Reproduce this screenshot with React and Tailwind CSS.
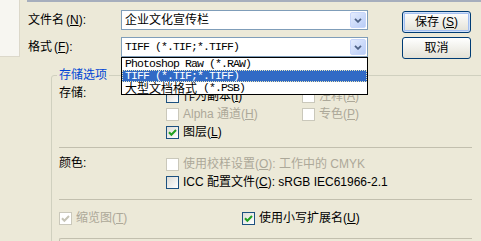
import React from "react";

function Chk({ checked, disabled }) {
  return (
    <span
      className={
        disabled
          ? "w-[13px] h-[13px] shrink-0 border border-[#cac8bb] bg-white flex items-center justify-center"
          : "w-[13px] h-[13px] shrink-0 border border-[#1c5180] bg-linear-to-br from-[#dcdcd7] to-white flex items-center justify-center"
      }
    >
      {checked && (
        <svg width="9" height="9" viewBox="0 0 9 9">
          <path
            d="M1 4.2 L3.4 6.8 L8 2"
            fill="none"
            stroke={disabled ? "#c6c4b6" : "#21a121"}
            strokeWidth="2"
          />
        </svg>
      )}
    </span>
  );
}

function Opt({ checked, disabled, children }) {
  return (
    <div className="flex items-center h-[18px]">
      <Chk checked={checked} disabled={disabled} />
      <span
        className={
          disabled
            ? "ml-[4px] text-[12px] leading-[14px] whitespace-nowrap text-[#aca899]"
            : "ml-[4px] text-[12px] leading-[14px] whitespace-nowrap text-black"
        }
      >
        {children}
      </span>
    </div>
  );
}

function Arrow() {
  return (
    <span className="w-[16px] h-[16px] mr-[1px] shrink-0 rounded-[2px] border border-[#c7d6fb] bg-linear-to-br from-[#e4ecfe] to-[#b8ccf6] flex items-center justify-center">
      <svg width="8" height="5" viewBox="0 0 8 5">
        <path d="M1 0.8 L4 3.8 L7 0.8" fill="none" stroke="#4d6185" strokeWidth="1.8" />
      </svg>
    </span>
  );
}

const MONO = "font-['Liberation_Mono',monospace] text-[11.5px] tracking-[-0.9px]";

export default function App() {
  return (
    <div className="w-[481px] h-[241px] overflow-hidden bg-[#ece9d8] text-black text-[12px] leading-[14px] font-['Liberation_Sans','Noto_Sans_CJK_SC',sans-serif]">
      {/* top section */}
      <div className="flex h-[59px]">
        <div className="w-[20px] h-[57px] shrink-0 bg-[#f7f6f1] border-r border-b border-[#dcd8ca]" />
        <div className="ml-[7px] flex-1 flex flex-col">
          <div className="h-[2px] w-full bg-[#a6aebd]" />
          <div className="flex mt-[8px]">
            <div className="flex flex-col">
              <div className="flex items-center h-[20px]">
                <span className="w-[94px] pl-[1px] whitespace-nowrap">
                  文件名<span className="ml-[2px]">(<u>N</u>):</span>
                </span>
                <div className="w-[247px] h-[20px] border border-[#7f9db9] bg-white flex items-center">
                  <span className="flex-1 pl-[3px] whitespace-nowrap">企业文化宣传栏</span>
                  <Arrow />
                </div>
              </div>
              <div className="flex items-center h-[20px] mt-[7px]">
                <span className="w-[94px] pl-[1px] whitespace-nowrap">
                  格式<span className="ml-[2px]">(<u>F</u>):</span>
                </span>
                <div className="relative w-[247px] h-[20px] border border-[#7f9db9] bg-white flex items-center">
                  <span className={"flex-1 pl-[3px] whitespace-nowrap " + MONO}>
                    TIFF (*.TIF;*.TIFF)
                  </span>
                  <Arrow />
                  <div className="absolute left-[-1px] top-[19px] w-[247px] h-[38px] border border-black bg-white z-10 flex flex-col">
                    <div className={"h-[12px] leading-[12px] pl-[3px] whitespace-nowrap " + MONO}>
                      Photoshop Raw (*.RAW)
                    </div>
                    <div
                      className={
                        "h-[12px] leading-[12px] pl-[3px] whitespace-nowrap bg-[#316ac5] text-white outline-1 outline-dotted outline-[#e8e4b8] -outline-offset-1 " +
                        MONO
                      }
                    >
                      TIFF (*.TIF;*.TIFF)
                    </div>
                    <div className="h-[12px] leading-[12px] pl-[3px] whitespace-nowrap flex items-center">
                      <span className="text-[12px] leading-[12px] font-['Noto_Sans_CJK_SC',sans-serif]">
                        大型文档格式
                      </span>
                      <span className={MONO}>&nbsp;(*.PSB)</span>
                    </div>
                  </div>
                </div>
              </div>
            </div>
            <div className="ml-[34px] mt-[1px] flex flex-col gap-[4px]">
              <button className="w-[69px] h-[22px] rounded-[3px] border border-[#003c74] bg-linear-to-b from-white to-[#e3e1d6] shadow-[inset_0_0_0_1px_#cfe0fa,inset_0_0_0_2px_#a3bff0] flex items-center justify-center text-[12px] leading-[14px]">
                保存<span className="ml-[3px]">(<u>S</u>)</span>
              </button>
              <button className="w-[69px] h-[22px] rounded-[3px] border border-[#003c74] bg-linear-to-b from-white to-[#e3e1d6] flex items-center justify-center text-[12px] leading-[14px]">
                取消
              </button>
            </div>
          </div>
        </div>
      </div>

      {/* group box */}
      <fieldset className="mt-[10px] ml-[51px] w-[440px] border border-[#d0d0bf] rounded-[3px]">
        <legend className="ml-[5px] px-[2px] text-[12px] leading-[13px] text-[#0046d5]">存储选项</legend>
        <div className="pl-[7px] flex flex-col">
          {/* storage */}
          <div className="flex mt-[4px]">
            <span className="w-[107px] shrink-0">存储:</span>
            <div className="mt-[1px] grid grid-cols-[136px_auto]">
              <Opt>
                作为副本(<u>I</u>)
              </Opt>
              <Opt disabled>
                注释(<u>A</u>)
              </Opt>
              <Opt disabled>
                Alpha 通道(<u>H</u>)
              </Opt>
              <Opt disabled>
                专色(<u>P</u>)
              </Opt>
              <Opt checked>
                图层(<u>L</u>)
              </Opt>
            </div>
          </div>
          <div className="mt-[6px] w-[413px] h-[1px] bg-[#c2bfae]" />
          {/* color */}
          <div className="flex mt-[7px]">
            <span className="w-[107px] shrink-0 mt-[1px]">颜色:</span>
            <div className="flex flex-col">
              <Opt disabled>
                使用校样设置(<u>O</u>): 工作中的 CMYK
              </Opt>
              <Opt>
                ICC 配置文件(<u>C</u>): sRGB IEC61966-2.1
              </Opt>
            </div>
          </div>
          <div className="mt-[8px] w-[413px] h-[1px] bg-[#c2bfae]" />
          {/* bottom options */}
          <div className="flex mt-[9px]">
            <div className="w-[183px] shrink-0">
              <Opt checked disabled>
                缩览图(<u>T</u>)
              </Opt>
            </div>
            <Opt checked>
              使用小写扩展名(<u>U</u>)
            </Opt>
          </div>
          <div className="mt-[11px] w-[413px] h-[10px] border-t border-l border-[#c2bfae] rounded-tl-[2px]" />
        </div>
      </fieldset>
    </div>
  );
}
